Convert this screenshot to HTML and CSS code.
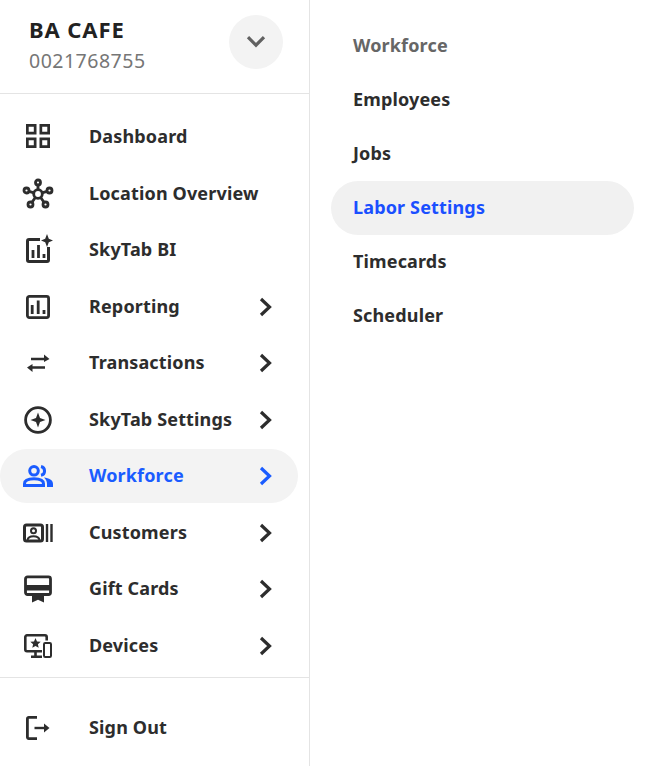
FILE: index.html
```html
<!DOCTYPE html>
<html lang="en">
<head>
<meta charset="utf-8">
<title>Workforce menu</title>
<link rel="stylesheet" href="styles.css">
</head>
<body>
<div class="app">
  <aside class="sidebar">
    <header class="account">
      <div class="account-text">
        <div class="account-name">BA CAFE</div>
        <div class="account-id">0021768755</div>
      </div>
      <button class="account-toggle" type="button" aria-label="Switch location">
        <svg width="20" height="14" viewBox="0 0 20 14"><path class="stroke" d="M2 2.200l8 8 8-8" stroke="#616161" stroke-width="3.200"/></svg>
      </button>
    </header>
    <nav class="nav">
      <a class="nav-item">
        <span class="nav-icon nav-icon-up"><svg width="24" height="24" viewBox="0 0 24 24"><path class="stroke" stroke-width="2.700" d="M1.350 1.350h7.800v7.800H1.350zM14.850 1.350h7.800v7.800h-7.800zM1.350 14.850h7.800v7.800H1.350zM14.850 14.850h7.800v7.800h-7.800z"/></svg></span>
        <span class="nav-label">Dashboard</span>
      </a>
      <a class="nav-item">
        <span class="nav-icon"><svg width="32" height="32" viewBox="0 0 32 32"><g class="stroke" stroke-width="2.800"><circle cx="16" cy="16" r="4.300"/><circle cx="16" cy="4.500" r="2.500"/><circle cx="4.500" cy="12.500" r="2.500"/><circle cx="27.500" cy="12.500" r="2.500"/><circle cx="8.500" cy="26.500" r="2.500"/><circle cx="23.500" cy="26.500" r="2.500"/><path d="M16 7v5M7 13.400l5 1.400M25 13.400l-5 1.400M10 24.300l3.500-5M22 24.300l-3.500-5"/></g></svg></span>
        <span class="nav-label">Location Overview</span>
      </a>
      <a class="nav-item">
        <span class="nav-icon"><svg width="30" height="32" viewBox="0 0 30 32"><path class="stroke" stroke-width="3" d="M17 5.500H6a1.500 1.500 0 0 0-1.500 1.500v19A1.500 1.500 0 0 0 6 27.500h18a1.500 1.500 0 0 0 1.500-1.500V13"/><path class="stroke" stroke-width="2.800" d="M10 24v-8M15.500 24V11M21 24v-4"/><path class="fill" d="M24 0l1.800 4.700L30 6.500l-4.200 1.800L24 13l-1.800-4.700L18 6.500l4.200-1.800z"/></svg></span>
        <span class="nav-label">SkyTab BI</span>
      </a>
      <a class="nav-item">
        <span class="nav-icon"><svg width="24" height="24" viewBox="0 0 24 24"><rect class="stroke" stroke-width="2.800" x="1.400" y="1.400" width="21.200" height="21.200" rx="2"/><path class="stroke" stroke-width="2.800" d="M6.200 19v-9M12.200 19V5.500M18 19v-4"/></svg></span>
        <span class="nav-label">Reporting</span>
        <svg class="chevron" width="16" height="20" viewBox="0 0 16 20"><path class="stroke" stroke-width="3.200" d="M3 2l8.500 8L3 18"/></svg>
      </a>
      <a class="nav-item">
        <span class="nav-icon"><svg width="24" height="24" viewBox="0 0 24 24"><path class="stroke" stroke-width="2.400" d="M5 8h14M5 16.500h14"/><path class="fill" d="M18 3.500L23.500 8 18 11zM6.500 21L1 16.500 6.500 13z"/></svg></span>
        <span class="nav-label">Transactions</span>
        <svg class="chevron" width="16" height="20" viewBox="0 0 16 20"><path class="stroke" stroke-width="3.200" d="M3 2l8.500 8L3 18"/></svg>
      </a>
      <a class="nav-item">
        <span class="nav-icon"><svg width="28" height="28" viewBox="0 0 28 28"><circle class="stroke" stroke-width="2.800" cx="14" cy="14" r="12.400"/><path class="fill" d="M14 6.500l2 5.500 5.500 2-5.500 2-2 5.500-2-5.500-5.500-2 5.500-2z"/></svg></span>
        <span class="nav-label">SkyTab Settings</span>
        <svg class="chevron" width="16" height="20" viewBox="0 0 16 20"><path class="stroke" stroke-width="3.200" d="M3 2l8.500 8L3 18"/></svg>
      </a>
      <a class="nav-item is-active">
        <span class="nav-icon"><svg width="30" height="22" viewBox="0 0 30 22"><g class="stroke" stroke-width="3"><circle cx="11" cy="5.800" r="4.300"/><path d="M1.500 20.500v-1.700c0-3.300 3.500-5 9.500-5s9.500 1.700 9.500 5v1.700z"/><path d="M18 1.500a4.500 4.500 0 0 1 0 8.800"/></g><path class="fill" d="M21 12.500c5 .5 9 2.500 9 6.500v3h-6v-3c0-2.500-1-4.500-3-6.500z"/></svg></span>
        <span class="nav-label">Workforce</span>
        <svg class="chevron" width="16" height="20" viewBox="0 0 16 20"><path class="stroke" stroke-width="3.200" d="M3 2l8.500 8L3 18"/></svg>
      </a>
      <a class="nav-item">
        <span class="nav-icon"><svg width="30" height="20" viewBox="0 0 30 20"><rect class="stroke" stroke-width="3" x="1.500" y="2" width="18" height="16" rx="2"/><circle class="stroke" stroke-width="2" cx="10.500" cy="7.800" r="2.500"/><path class="stroke" stroke-width="2" d="M4.500 17c.5-3 2.500-3.800 6-3.800s5.500.8 6 3.800"/><path class="stroke" stroke-width="2.400" d="M24 1v18M28.500 1v18"/></svg></span>
        <span class="nav-label">Customers</span>
        <svg class="chevron" width="16" height="20" viewBox="0 0 16 20"><path class="stroke" stroke-width="3.200" d="M3 2l8.500 8L3 18"/></svg>
      </a>
      <a class="nav-item">
        <span class="nav-icon"><svg width="28" height="28" viewBox="0 0 28 28"><path class="stroke" stroke-width="2.800" d="M3.500 1.900h21a2 2 0 0 1 2 2v13.600a2 2 0 0 1-2 2h-21a2 2 0 0 1-2-2V3.900a2 2 0 0 1 2-2z"/><path class="fill" d="M1 10h26v5.500H1zM8 20h12v7.500l-6-2.700-6 2.700z"/></svg></span>
        <span class="nav-label">Gift Cards</span>
        <svg class="chevron" width="16" height="20" viewBox="0 0 16 20"><path class="stroke" stroke-width="3.200" d="M3 2l8.500 8L3 18"/></svg>
      </a>
      <a class="nav-item">
        <span class="nav-icon"><svg width="28" height="24" viewBox="0 0 28 24"><path class="stroke" stroke-width="2.600" d="M18 17.200H3a1.700 1.700 0 0 1-1.700-1.700V3A1.700 1.700 0 0 1 3 1.300h18A1.700 1.700 0 0 1 22.700 3v3.500"/><path class="stroke" stroke-width="2.600" d="M11.500 17.500v5M7 22.700h11"/><rect class="stroke" stroke-width="2" x="20" y="9" width="7" height="14" rx="1.200"/><path class="fill" d="M11.500 4l1.500 3.400 3.700.4-2.800 2.400.8 3.600-3.200-1.900-3.200 1.900.8-3.600-2.800-2.400 3.700-.4z"/></svg></span>
        <span class="nav-label">Devices</span>
        <svg class="chevron" width="16" height="20" viewBox="0 0 16 20"><path class="stroke" stroke-width="3.200" d="M3 2l8.500 8L3 18"/></svg>
      </a>
    </nav>
    <footer class="sidebar-foot">
      <a class="nav-item">
        <span class="nav-icon"><svg width="24" height="24" viewBox="0 0 24 24"><path class="stroke" stroke-width="2.800" d="M11 1.400H3A1.500 1.500 0 0 0 1.400 3v18A1.500 1.500 0 0 0 3 22.600h8"/><path class="stroke" stroke-width="2.400" d="M8.500 12H20"/><path class="fill" d="M18 7.500l5.500 4.500-5.500 4.500z"/></svg></span>
        <span class="nav-label">Sign Out</span>
      </a>
    </footer>
  </aside>
  <section class="submenu">
    <div class="submenu-title">Workforce</div>
    <a class="submenu-item">Employees</a>
    <a class="submenu-item">Jobs</a>
    <a class="submenu-item is-active">Labor Settings</a>
    <a class="submenu-item">Timecards</a>
    <a class="submenu-item">Scheduler</a>
  </section>
</div>
</body>
</html>
```

FILE: styles.css
```css
* { box-sizing: border-box; }
html, body { margin: 0; height: 100%; background: #fff; }
body { font-family: "Noto Sans", "Open Sans", sans-serif; color: #2d2d2d; overflow: hidden; }

.app { display: flex; height: 766px; }

.sidebar { width: 310px; flex: none; border-right: 1px solid #e4e4e4; display: flex; flex-direction: column; }

.account { height: 94px; flex: none; padding: 15px 26px 0 29px; border-bottom: 1px solid #e4e4e4; display: flex; justify-content: space-between; align-items: flex-start; }
.account-name { font-size: 22px; line-height: 26px; font-weight: 700; color: #222; margin-top: 1px; letter-spacing: .9px; }
.account-id { font-size: 19.500px; line-height: 26px; color: #767676; letter-spacing: .5px; margin-top: 6px; }
.account-toggle { width: 54px; height: 54px; border: 0; border-radius: 50%; background: #f3f3f3; padding: 0; display: flex; align-items: center; justify-content: center; }

.nav { flex: none; padding-top: 16px; padding-bottom: 4px; display: flex; flex-direction: column; gap: 2.500px; height: 583.500px; border-bottom: 1px solid #e4e4e4; }
.nav-item { width: 298px; height: 54px; flex: none; display: flex; align-items: center; border-radius: 27px; font-size: 18px; letter-spacing: .15px; font-weight: 700; color: #2d2d2d; }
.nav-item .stroke { stroke: currentColor; }
.nav-item .fill { fill: currentColor; }
.nav-icon { width: 76px; flex: none; padding-left: 38px; display: flex; align-items: center; }
.nav-icon svg { flex: none; transform: translateX(-50%); }
.nav-icon-up { padding-bottom: 2px; }
.nav-label { margin-left: 13px; flex: 1; white-space: nowrap; padding-bottom: 2px; }
.chevron { flex: none; margin-right: 24px; }
.nav-item.is-active { background: #f3f3f3; color: #1a5cff; }

.stroke { fill: none; stroke-linecap: butt; stroke-linejoin: miter; }

.sidebar-foot { padding-top: 23px; }

.submenu { flex: 1; padding: 19px 21px 0; display: flex; flex-direction: column; }
.submenu-title, .submenu-item { height: 54px; flex: none; display: flex; align-items: center; padding: 0 0 2px 22px; border-radius: 27px; font-size: 18px; letter-spacing: .15px; font-weight: 700; }
.submenu-title { color: #666; }
.submenu-item { color: #2d2d2d; }
.submenu-item.is-active { background: #f1f1f1; color: #1a4fff; }
```
